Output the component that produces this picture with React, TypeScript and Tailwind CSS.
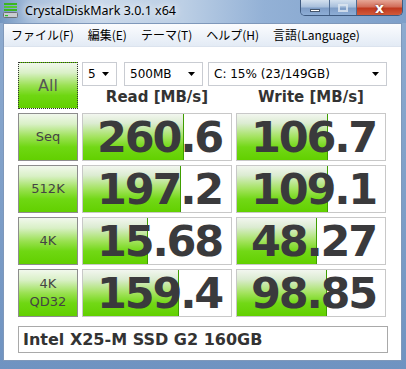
import React from "react";

type Row = {
  label: string[];
  read: string;
  readBar: number;
  write: string;
  writeBar: number;
};

const rows: Row[] = [
  { label: ["Seq"], read: "260.6", readBar: 101, write: "106.7", writeBar: 91 },
  { label: ["512K"], read: "197.2", readBar: 98, write: "109.1", writeBar: 91 },
  { label: ["4K"], read: "15.68", readBar: 65, write: "48.27", writeBar: 80 },
  { label: ["4K", "QD32"], read: "159.4", readBar: 96, write: "98.85", writeBar: 90 },
];

const greenBtn =
  "bg-[linear-gradient(to_bottom,#f1f8ec_0%,#d9f0c6_22%,#9ae152_50%,#6fd712_72%,#62d000_100%)]";

function Combo({ text, width }: { text: string; width: string }) {
  return (
    <div
      className={`${width} h-[24px] flex items-center justify-between border border-[#c9ccd2] bg-white pl-[5px] pr-[7px] text-[12px] text-black font-['DejaVu_Sans',sans-serif]`}
    >
      <span>{text}</span>
      <svg width="7" height="4" viewBox="0 0 7 4">
        <path d="M0 0h7L3.5 4z" fill="#000" />
      </svg>
    </div>
  );
}

function ScoreBox({ value, bar }: { value: string; bar: number }) {
  return (
    <div className="relative h-[48px] border border-[#c8c8c8] bg-white">
      <div
        className="absolute left-0 top-0 bottom-0 border-r border-[#3f9e00] bg-[linear-gradient(to_bottom,#f2f6ef_0%,#dcecd2_20%,#a3e35e_50%,#72d816_72%,#62d000_100%)]"
        style={{ width: bar }}
      />
      <div className="relative h-full flex items-center justify-end pr-[9px] text-[43px] leading-[46px] font-bold tracking-[-2.2px] text-[#3a3a3c] font-['DejaVu_Sans',sans-serif]">
        {value}
      </div>
    </div>
  );
}

export default function App() {
  return (
    <div className="w-[406px] h-[369px] overflow-hidden flex flex-col bg-[linear-gradient(to_bottom,#8facd0,#6f93c1)]">
      {/* title bar */}
      <div className="h-[23px] flex items-start bg-[linear-gradient(90deg,#7396c1_0%,#aac1dd_8%,#c9d8ea_25%,#bccfe5_45%,#93b1d6_65%,#7d9fc9_100%)]">
        <svg className="mt-[3px] ml-[3px]" width="15" height="15" viewBox="0 0 15 15">
          <rect x="1" y="0" width="13" height="2" fill="#3cb521" />
          <rect x="1" y="3" width="13" height="2" fill="#52c930" />
          <rect x="1" y="6" width="13" height="2" fill="#3cb521" />
          <rect x="0.5" y="9.5" width="14" height="5" rx="1" fill="#c9ccd0" stroke="#6d7075" />
          <rect x="2" y="12" width="3" height="1.2" fill="#2bbf2b" />
        </svg>
        <span className="ml-[7px] mt-[3px] text-[12.5px] leading-[15px] text-black font-['Noto_Sans',sans-serif] [text-shadow:0_0_6px_#fff,0_0_10px_#fff]">
          CrystalDiskMark 3.0.1 x64
        </span>
        <div className="ml-auto mr-[3px] flex h-[16px] rounded-b-[5px] border border-t-0 border-[#3e5a80] overflow-hidden">
          <div className="w-[29px] flex items-center justify-center bg-[linear-gradient(to_bottom,#d3e0ee_0%,#a9c0dc_45%,#7e9dc6_55%,#8eaed6_100%)] border-r border-[#4f6c92]">
            <div className="mt-[5px] w-[10px] h-[3px] bg-white border border-[#44556b]" />
          </div>
          <div className="w-[27px] flex items-center justify-center bg-[linear-gradient(to_bottom,#d3e0ee_0%,#a9c0dc_45%,#7e9dc6_55%,#8eaed6_100%)] border-r border-[#4f6c92]">
            <div className="w-[10px] h-[8px] border-[2px] border-[#dfe7f1] opacity-80" />
          </div>
          <div className="w-[45px] flex items-center justify-center bg-[linear-gradient(to_bottom,#e6a696_0%,#d26e5a_45%,#c0391f_55%,#d25a3a_100%)]">
            <span className="text-[14px] leading-none font-bold text-white font-['DejaVu_Sans',sans-serif] [text-shadow:0_0_2px_#5a1a10]">
              x
            </span>
          </div>
        </div>
      </div>

      {/* window body */}
      <div className="ml-[3px] mr-[4px] mb-[8px] flex-1 flex flex-col border border-[#7f98ba] bg-white">
        <div className="h-[23px] flex items-center text-[12px] text-black font-['Noto_Sans_CJK_JP',sans-serif] bg-[linear-gradient(to_bottom,#fbfcfe,#e3ebf5)] border-b border-[#dbe3ee]">
          <span className="px-[7px]">ファイル(F)</span>
          <span className="px-[7px]">編集(E)</span>
          <span className="px-[7px]">テーマ(T)</span>
          <span className="px-[7px]">ヘルプ(H)</span>
          <span className="px-[7px]">言語(Language)</span>
        </div>

        <div className="flex-1 pt-[15px] pl-[14px]">
          <div className="flex gap-[4px]">
            <div
              className={`w-[60px] h-[47px] flex items-center justify-center border border-dotted border-[#333] ${greenBtn} text-[16px] text-[#555] font-['DejaVu_Sans',sans-serif]`}
            >
              All
            </div>
            <div className="flex flex-col">
              <div className="flex">
                <Combo text="5" width="w-[35px]" />
                <div className="ml-[7px]">
                  <Combo text="500MB" width="w-[79px]" />
                </div>
                <div className="ml-[5px]">
                  <Combo text="C: 15% (23/149GB)" width="w-[179px]" />
                </div>
              </div>
              <div className="h-[23px] flex items-center text-[15px] font-bold text-[#333] font-['DejaVu_Sans',sans-serif]">
                <div className="w-[150px] text-center">Read [MB/s]</div>
                <div className="w-[150px] ml-[4px] text-center">Write [MB/s]</div>
              </div>
            </div>
          </div>

          <div className="mt-[4px] grid grid-cols-[60px_150px_150px] gap-x-[4px] gap-y-[4px]">
            {rows.map((r) => (
              <React.Fragment key={r.read}>
                <div
                  className={`h-[48px] flex flex-col items-center justify-center border border-[#8d8d8d] ${greenBtn} text-[13px] leading-[18px] text-[#444] font-['DejaVu_Sans',sans-serif]`}
                >
                  {r.label.map((l) => (
                    <span key={l}>{l}</span>
                  ))}
                </div>
                <ScoreBox value={r.read} bar={r.readBar} />
                <ScoreBox value={r.write} bar={r.writeBar} />
              </React.Fragment>
            ))}
          </div>

          <div className="mt-[9px] w-[370px] h-[27px] flex items-center pl-[4px] border border-[#a9a9a9] text-[16px] font-bold text-[#333] font-['DejaVu_Sans',sans-serif]">
            Intel X25-M SSD G2 160GB
          </div>
        </div>
      </div>
    </div>
  );
}
